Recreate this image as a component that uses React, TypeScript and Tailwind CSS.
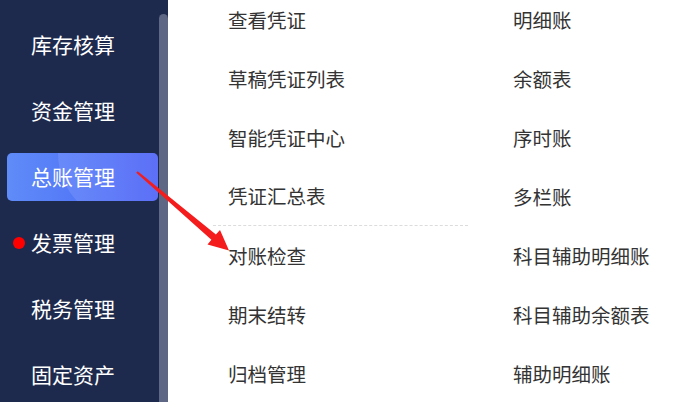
const menu = [
  { label: '库存核算' },
  { label: '资金管理' },
  { label: '总账管理', active: true },
  { label: '发票管理', dot: true },
  { label: '税务管理' },
  { label: '固定资产' },
];

const left = ['查看凭证', '草稿凭证列表', '智能凭证中心', '凭证汇总表', '对账检查', '期末结转', '归档管理'];
const right = ['明细账', '余额表', '序时账', '多栏账', '科目辅助明细账', '科目辅助余额表', '辅助明细账'];

const font = { fontFamily: '"Microsoft YaHei", "Noto Sans CJK SC", "Noto Sans", sans-serif' };

export default function App() {
  return (
    <div className="relative flex h-[402px] w-[696px] overflow-hidden bg-white" style={font}>
      {/* sidebar */}
      <aside className="flex h-full w-[168px] shrink-0 bg-[#1e2a4d]">
        <nav className="flex w-[159px] flex-col gap-[18px] pt-[21px]">
          {menu.map((m, i) => (
            <div
              key={i}
              className={
                m.active
                  ? 'relative ml-[7px] flex h-[48px] w-[151px] shrink-0 items-center overflow-hidden rounded-[5px] bg-gradient-to-r from-[#5f8cf8] to-[#4a5ff6] pl-[24px] text-[21px] text-white'
                  : 'relative ml-[7px] flex h-[48px] w-[151px] shrink-0 items-center pl-[24px] text-[21px] text-white'
              }
            >
              {m.active && (
                <div className="absolute -right-[40px] -top-[70px] h-[140px] w-[140px] rounded-full bg-white/10" />
              )}
              {m.dot && <span className="absolute left-[6px] top-1/2 h-[12px] w-[12px] -translate-y-1/2 rounded-full bg-[#ff0000]" />}
              <span className="relative">{m.label}</span>
            </div>
          ))}
        </nav>
        <div className="flex w-[9px] flex-col pt-[14px]">
          <div className="flex-1 rounded-t-full bg-[#5e6783]" />
        </div>
      </aside>

      {/* content */}
      <main className="flex-1 pl-[45px]">
        <div className="-mt-[10px] grid grid-cols-[255px_255px] gap-x-[30px]">
          <div className="flex flex-col">
            {left.map((t, i) => (
              <div
                key={t}
                className={
                  i === 3
                    ? 'flex h-[59px] items-center border-b border-dashed border-[#dcdcdc] pl-[15px] text-[19.5px] text-[#333]'
                    : 'flex h-[59px] items-center pl-[15px] text-[19.5px] text-[#333]'
                }
              >
                {t}
              </div>
            ))}
          </div>
          <div className="flex flex-col">
            {right.map((t) => (
              <div key={t} className="flex h-[59px] items-center pl-[15px] text-[19.5px] text-[#333]">
                {t}
              </div>
            ))}
          </div>
        </div>
      </main>

      {/* annotation arrow */}
      <svg className="pointer-events-none absolute left-0 top-0" width="696" height="402">
        <polygon
          points="136.3,172.8 211.4,239.8 207.5,244.5 229,250.5 220,230 215.9,234.4 137.7,171.2"
          fill="#f41c1c"
        />
      </svg>
    </div>
  );
}
